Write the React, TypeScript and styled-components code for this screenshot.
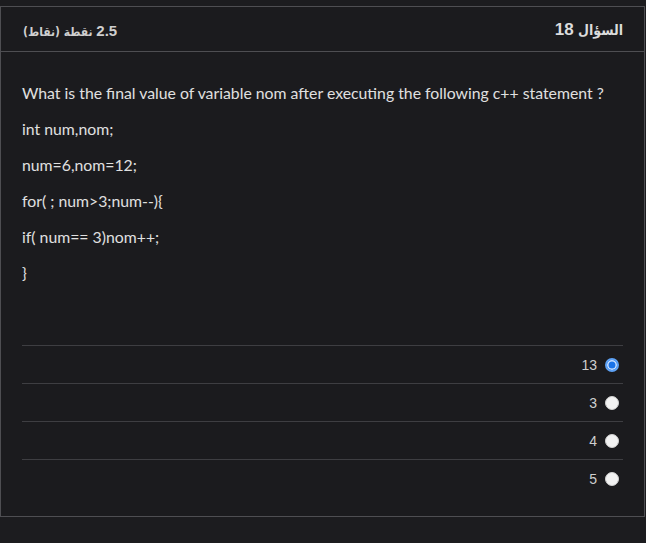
import React, { useState } from 'react';
import styled, { createGlobalStyle } from 'styled-components';

const GlobalStyle = createGlobalStyle`
  html, body {
    margin: 0;
    padding: 0;
    background: #1c1c1f;
  }
  body {
    padding-top: 6px;
    height: 543px;
    box-sizing: border-box;
    overflow: hidden;
  }
`;

const Card = styled.div`
  direction: rtl;
  width: 645px;
  box-sizing: border-box;
  border: 1px solid #4e4e52;
  background: #1b1b1e;
`;

const Header = styled.div`
  display: flex;
  justify-content: space-between;
  align-items: center;
  height: 44px;
  padding: 0 21px 0 22px;
  border-bottom: 1px solid #4e4e52;
  font-family: 'DejaVu Sans Condensed', 'DejaVu Sans', sans-serif;
  font-weight: bold;
  font-stretch: condensed;
`;

const QuestionNo = styled.span`
  font-size: 14px;
  color: #dcdcdc;
  padding-top: 2px;
`;

const Points = styled.span`
  font-size: 12px;
  color: #cfcfcf;
  padding-top: 2px;
`;

const Num = styled.span<{ size: number }>`
  font-family: 'Liberation Sans', Arial, sans-serif;
  font-stretch: normal;
  font-size: ${({ size }) => size}px;
`;

const Body = styled.div`
  padding: 32px 21px 19px 21px;
`;

const Text = styled.div`
  direction: ltr;
  text-align: left;
  font-family: Lato, 'Open Sans', sans-serif;
  font-size: 15.8px;
  color: #e0e0e0;
`;

const Para = styled.p`
  margin: 0 0 18px;
  line-height: 18px;
`;

const Options = styled.div`
  margin-top: 63px;
`;

const Option = styled.label`
  display: flex;
  align-items: center;
  gap: 8px;
  height: 38px;
  border-top: 1px solid #3e3e42;
  padding-right: 4px;
  box-sizing: border-box;
  cursor: pointer;
  font-family: 'Liberation Sans', Arial, sans-serif;
  font-size: 14px;
  color: #cfcfcf;
`;

const Radio = styled.span<{ checked?: boolean }>`
  width: 14px;
  height: 14px;
  border-radius: 50%;
  box-sizing: border-box;
  background: ${({ checked }) => (checked ? '#1a73e8' : '#f2f2f2')};
  border: ${({ checked }) => (checked ? '2px solid #5ea2f5' : '1px solid #d0d0d0')};
  box-shadow: ${({ checked }) => (checked ? 'inset 0 0 0 1.5px #cfe3ff' : 'none')};
`;

const answers = ['13', '3', '4', '5'];

const App: React.FC = () => {
  const [picked, setPicked] = useState('13');

  return (
    <>
      <GlobalStyle />
      <Card>
        <Header>
          <QuestionNo>
            السؤال <Num size={17}>18</Num>
          </QuestionNo>
          <Points>
            <Num size={15}>2.5</Num> نقطة (نقاط)
          </Points>
        </Header>
        <Body>
          <Text>
            <Para>What is the final value of variable nom after executing the following c++ statement ?</Para>
            <Para>int num,nom;</Para>
            <Para>num=6,nom=12;</Para>
            <Para>for( ; num&gt;3;num--){'{'}</Para>
            <Para>if( num== 3)nom++;</Para>
            <Para>{'}'}</Para>
          </Text>
          <Options>
            {answers.map((a) => (
              <Option key={a} onClick={() => setPicked(a)}>
                <Radio checked={picked === a} />
                <span>{a}</span>
              </Option>
            ))}
          </Options>
        </Body>
      </Card>
    </>
  );
};

export default App;
